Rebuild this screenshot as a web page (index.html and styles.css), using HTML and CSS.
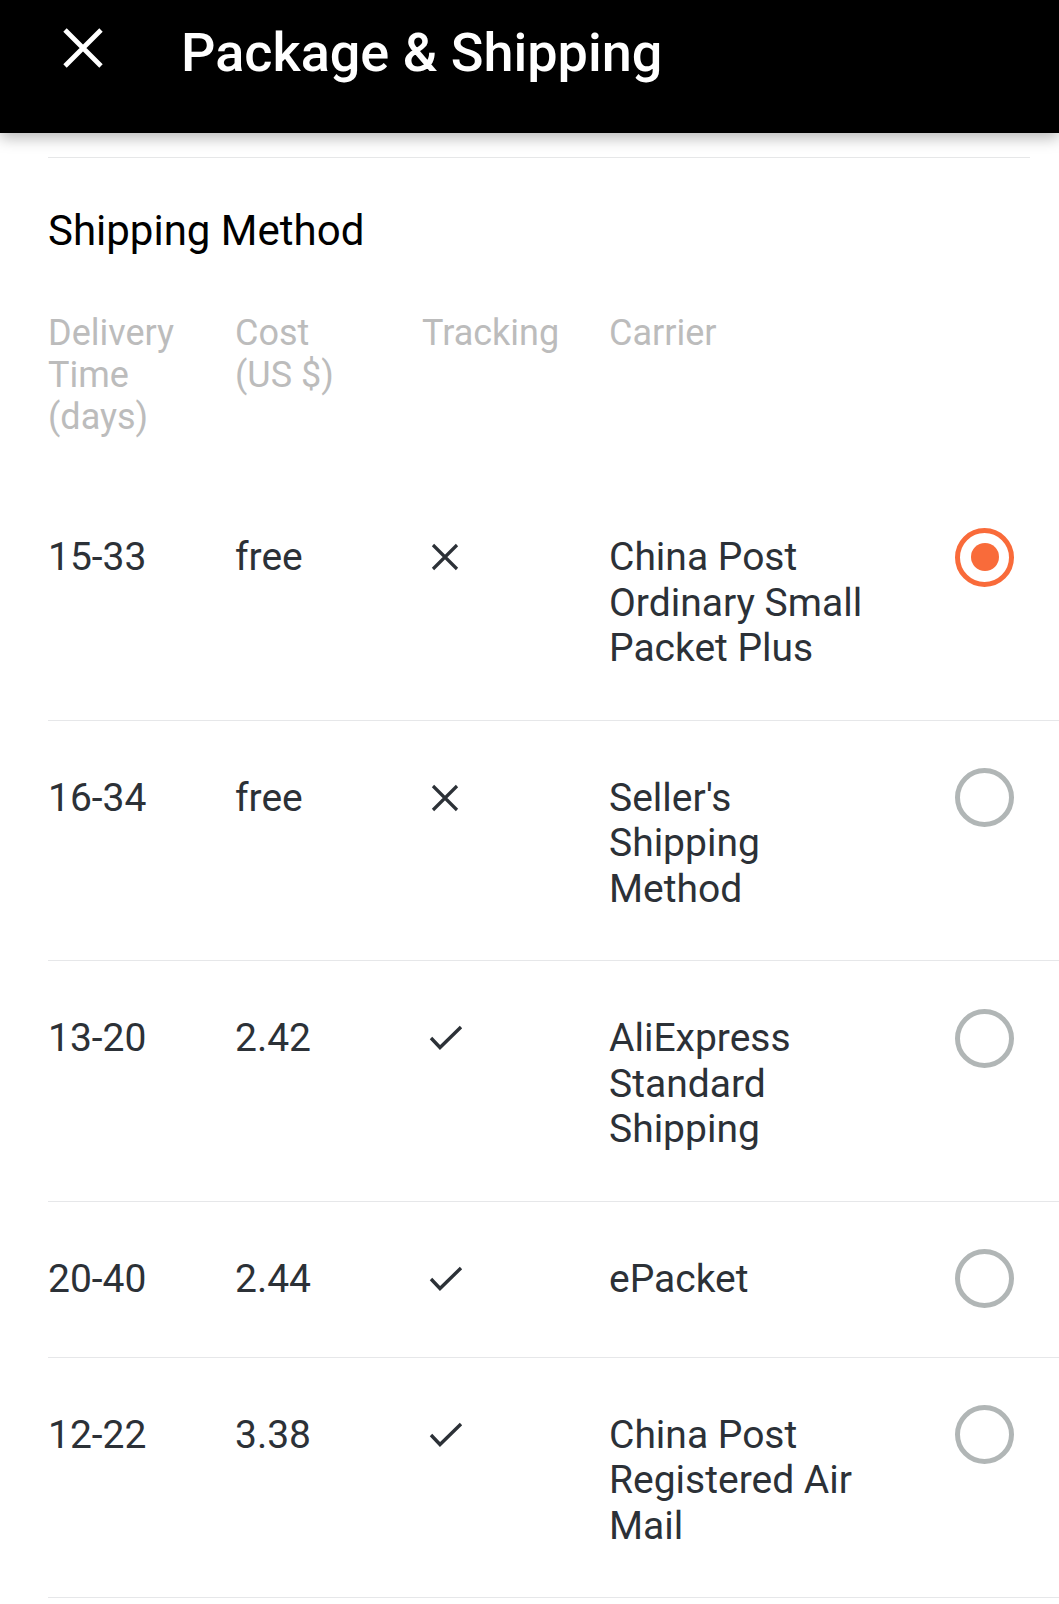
FILE: index.html
```html
<!DOCTYPE html>
<html lang="en">
<head>
<meta charset="utf-8">
<title>Package &amp; Shipping</title>
<link rel="stylesheet" href="styles.css">
</head>
<body>
<header class="topbar">
  <svg class="close-icon" width="40" height="40" viewBox="0 0 40 40" aria-hidden="true">
    <path d="M2 2 L38 38 M38 2 L2 38" stroke="#fff" stroke-width="4.8" fill="none"/>
  </svg>
  <h1 class="title">Package &amp; Shipping</h1>
</header>

<main class="content">
  <div class="top-divider"></div>
  <h2 class="section-title">Shipping Method</h2>

  <div class="table-head">
    <div class="th">Delivery Time (days)</div>
    <div class="th">Cost (US $)</div>
    <div class="th">Tracking</div>
    <div class="th">Carrier</div>
  </div>

  <div class="row">
    <div class="cell">15-33</div>
    <div class="cell">free</div>
    <div class="cell-icon"><svg class="ico-x" width="28" height="28" viewBox="0 0 28 28"><path d="M2 2 L26 26 M26 2 L2 26"/></svg></div>
    <div class="cell carrier">China Post Ordinary Small Packet Plus</div>
    <div class="cell-icon radio-cell"><span class="radio selected"></span></div>
  </div>

  <div class="row">
    <div class="cell">16-34</div>
    <div class="cell">free</div>
    <div class="cell-icon"><svg class="ico-x" width="28" height="28" viewBox="0 0 28 28"><path d="M2 2 L26 26 M26 2 L2 26"/></svg></div>
    <div class="cell carrier">Seller's Shipping Method</div>
    <div class="cell-icon radio-cell"><span class="radio"></span></div>
  </div>

  <div class="row">
    <div class="cell">13-20</div>
    <div class="cell">2.42</div>
    <div class="cell-icon"><svg class="ico-check" width="34" height="26" viewBox="0 0 34 26"><path d="M2 13 L11 22.5 L32 2"/></svg></div>
    <div class="cell carrier">AliExpress Standard Shipping</div>
    <div class="cell-icon radio-cell"><span class="radio"></span></div>
  </div>

  <div class="row">
    <div class="cell">20-40</div>
    <div class="cell">2.44</div>
    <div class="cell-icon"><svg class="ico-check" width="34" height="26" viewBox="0 0 34 26"><path d="M2 13 L11 22.5 L32 2"/></svg></div>
    <div class="cell carrier">ePacket</div>
    <div class="cell-icon radio-cell"><span class="radio"></span></div>
  </div>

  <div class="row">
    <div class="cell">12-22</div>
    <div class="cell">3.38</div>
    <div class="cell-icon"><svg class="ico-check" width="34" height="26" viewBox="0 0 34 26"><path d="M2 13 L11 22.5 L32 2"/></svg></div>
    <div class="cell carrier">China Post Registered Air Mail</div>
    <div class="cell-icon radio-cell"><span class="radio"></span></div>
  </div>
</main>
</body>
</html>
```

FILE: styles.css
```css
* {
  box-sizing: border-box;
}

html, body {
  margin: 0;
  padding: 0;
  background: #ffffff;
}

body {
  font-family: Roboto, "Noto Sans", "Liberation Sans", sans-serif;
  width: 1059px;
  overflow: hidden;
}

.topbar {
  position: relative;
  z-index: 2;
  height: 133px;
  background: #000000;
  display: flex;
  align-items: flex-start;
  padding: 21px 0 0 63px;
  box-shadow: 0 5px 14px rgba(0, 0, 0, 0.28);
}

.close-icon {
  display: block;
  margin-top: 7px;
  flex: none;
}

.title {
  margin: 0 0 0 78px;
  font-size: 54px;
  line-height: 64px;
  font-weight: 500;
  color: #ffffff;
  letter-spacing: 0;
}

.content {
  padding: 0 0 0 48px;
}

.top-divider {
  margin-top: 24px;
  width: 982px;
  height: 1px;
  background: #e6e7e8;
}

.section-title {
  margin: 47px 0 0 0;
  font-size: 42px;
  line-height: 52px;
  font-weight: 400;
  color: #000000;
}

.table-head {
  margin: 55px 0 42px 0;
  display: grid;
  grid-template-columns: 187px 187px 187px 262px;
  align-items: start;
}

.th {
  max-width: 128px;
  font-size: 36px;
  line-height: 42px;
  color: #bcbcbc;
}

.table-head .th:nth-child(3),
.table-head .th:nth-child(4) {
  max-width: none;
}

.row {
  display: grid;
  grid-template-columns: 187px 187px 187px 262px 1fr;
  align-items: start;
  padding: 47px 0 48px 0;
  border-bottom: 1px solid #e6e7e9;
}

.row:first-of-type {
  padding-top: 48px;
}

.cell {
  margin-top: 8px;
  font-size: 39px;
  line-height: 45.5px;
  color: #2c3137;
}

.cell-icon {
  height: 60px;
  display: flex;
  align-items: center;
  justify-content: flex-start;
}

.radio-cell {
  padding-left: 84px;
}

.ico-x {
  margin-left: 9px;
  display: block;
}

.ico-x path {
  stroke: #2c3137;
  stroke-width: 3.2;
  fill: none;
}

.ico-check {
  margin-left: 7px;
  display: block;
}

.ico-check path {
  stroke: #2c3137;
  stroke-width: 3.4;
  fill: none;
  stroke-linejoin: miter;
}

.radio {
  flex: none;
  display: flex;
  align-items: center;
  justify-content: center;
  width: 59px;
  height: 59px;
  border-radius: 50%;
  border: 5px solid #b1b6b6;
  background: #ffffff;
}

.radio.selected {
  border-color: #f96b3a;
}

.radio.selected::after {
  content: "";
  width: 28px;
  height: 28px;
  border-radius: 50%;
  background: #f96b3a;
}
```
